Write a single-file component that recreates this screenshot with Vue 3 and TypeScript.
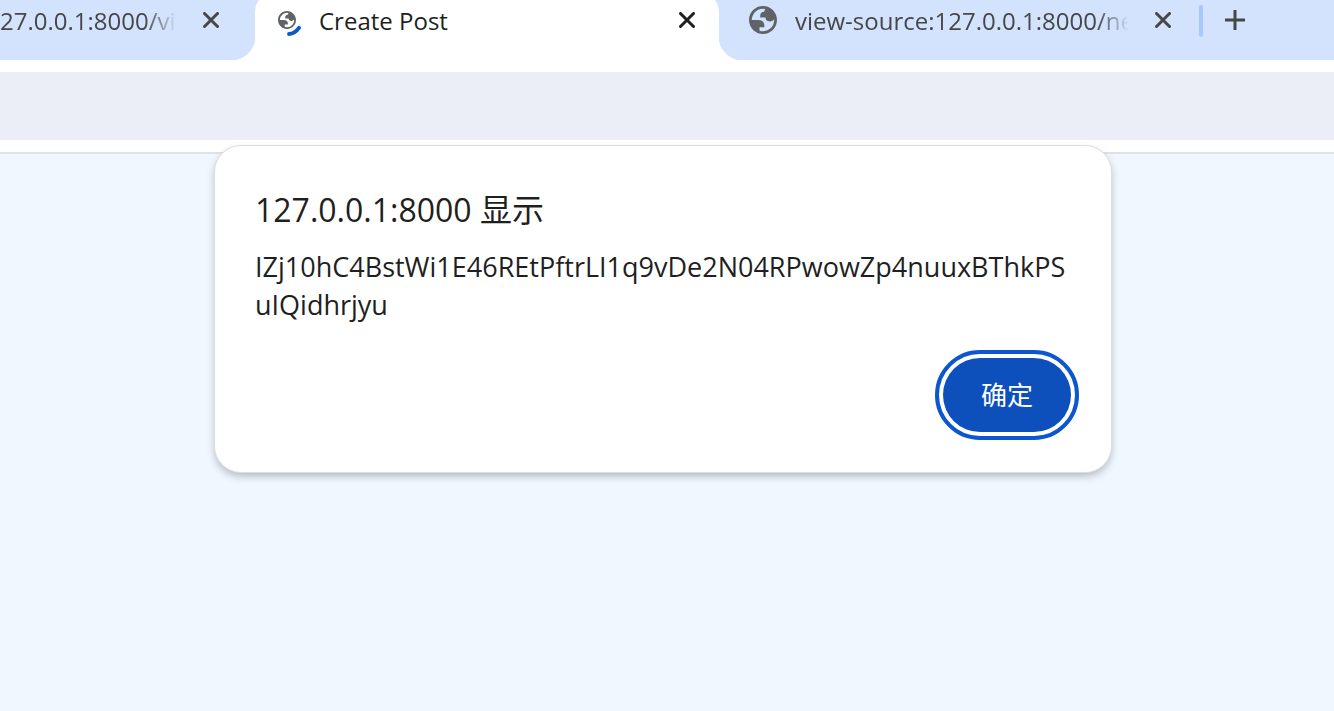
<script setup lang="ts">
import { ref } from 'vue'

interface Tab {
  title: string
  kind: 'leading' | 'active' | 'trailing'
  icon: boolean
  loading: boolean
}

const tabs: Tab[] = [
  { title: '27.0.0.1:8000/vi', kind: 'leading', icon: false, loading: false },
  { title: 'Create Post', kind: 'active', icon: true, loading: true },
  { title: 'view-source:127.0.0.1:8000/ne', kind: 'trailing', icon: true, loading: false },
]

const globe =
  'M12 2C6.48 2 2 6.48 2 12s4.48 10 10 10 10-4.48 10-10S17.52 2 12 2zM4 12h4.4c3.407.022 4.922 1.73 4.543 5.127H9.488v2.47a8.004 8.004 0 0 0 10.498-8.083C19.327 12.504 18.332 13 17 13c-2.137 0-3.206-.916-3.206-2.75h-3.748c-.274-2.728.683-4.092 2.87-4.092 0-.975.327-1.597.811-1.97A8.004 8.004 0 0 0 4 12z'

const open = ref(true)
const message = 'IZj10hC4BstWi1E46REtPftrLI1q9vDe2N04RPwowZp4nuuxBThkPSuIQidhrjyu'
</script>

<template>
  <div class="browser">
    <nav class="strip" aria-label="Tabs">
      <div v-for="tab in tabs" :key="tab.title" class="tab" :class="tab.kind">
        <span v-if="tab.icon" class="favicon">
          <svg v-if="tab.loading" width="28" height="32" viewBox="0 0 28 32" aria-hidden="true">
            <svg x="3" y="7" width="18" height="18" viewBox="2 2 20 20">
              <path :d="globe" fill="#5f6368" fill-rule="evenodd" />
            </svg>
            <path d="M14 30Q20 29.4 24 23.8" fill="none" stroke="#0b57d0" stroke-width="3.8" stroke-linecap="round" />
          </svg>
          <svg v-else width="28" height="28" viewBox="2 2 20 20" aria-hidden="true">
            <path :d="globe" fill="#5f6368" fill-rule="evenodd" />
          </svg>
        </span>
        <span class="title">{{ tab.title }}</span>
        <button class="icon-button" type="button" :aria-label="`Close ${tab.title}`">
          <svg width="16" height="16" viewBox="0 0 16 16" aria-hidden="true">
            <path d="M1.5 1.5l13 13M14.5 1.5l-13 13" stroke="currentColor" stroke-width="3" stroke-linecap="round" />
          </svg>
        </button>
      </div>
      <span class="divider"></span>
      <button class="icon-button add" type="button" aria-label="New tab">
        <svg width="20" height="20" viewBox="0 0 20 20" aria-hidden="true">
          <path d="M10 0v20M0 10h20" stroke="currentColor" stroke-width="3" />
        </svg>
      </button>
    </nav>
    <div class="toolbar"></div>
    <main class="page"></main>

    <div v-if="open" class="overlay">
      <section class="dialog" role="alertdialog" aria-labelledby="dialog-title" aria-describedby="dialog-message">
        <h1 id="dialog-title">127.0.0.1:8000 显示</h1>
        <p id="dialog-message">{{ message }}</p>
        <div class="actions">
          <button class="confirm" type="button" @click="open = false">确定</button>
        </div>
      </section>
    </div>
  </div>
</template>

<style>
body {
  background: #f0f7ff;
}
</style>

<style scoped>
.browser {
  position: relative;
  min-height: 100vh;
  display: flex;
  flex-direction: column;
  font-family: 'Open Sans', 'Noto Sans CJK SC', sans-serif;
  color: #1f1f1f;
}

.strip {
  display: flex;
  height: 60px;
  background: #d3e3fd;
  color: #474747;
}

.tab {
  position: relative;
  display: flex;
  align-items: center;
  box-sizing: border-box;
  height: 60px;
  padding-bottom: 20px;
}

.leading {
  width: 255px;
  padding-right: 36px;
}

.active {
  width: 464px;
  padding-left: 20px;
  padding-right: 24px;
  color: #1f1f1f;
}

.active::before {
  content: '';
  position: absolute;
  inset: -8px 0 0;
  border-radius: 20px 20px 0 0;
  background: #fff;
}

.active > * {
  position: relative;
}

.leading::after,
.trailing::before {
  content: '';
  position: absolute;
  bottom: 0;
  width: 24px;
  height: 24px;
}

.leading::after {
  right: 0;
  background: radial-gradient(circle at 0 0, transparent 24px, #fff 25px);
}

.trailing::before {
  left: 0;
  background: radial-gradient(circle at 100% 0, transparent 24px, #fff 25px);
}

.trailing {
  width: 480px;
  padding-left: 30px;
  padding-right: 28px;
}

.favicon {
  display: flex;
  flex: none;
  width: 28px;
  margin-right: 16px;
}

.trailing .favicon {
  margin-right: 18px;
}

.title {
  flex: 1;
  min-width: 0;
  padding-top: 2px;
  white-space: nowrap;
  font-size: 24px;
  line-height: 40px;
}

.leading .title,
.trailing .title {
  margin-right: 12px;
  mask-image: linear-gradient(to right, #000 calc(100% - 46px), transparent calc(100% - 14px));
}

.icon-button {
  display: flex;
  align-items: center;
  justify-content: center;
  flex: none;
  padding: 0;
  border: 0;
  background: none;
  color: inherit;
}

.tab .icon-button {
  width: 16px;
  height: 40px;
}

.divider {
  width: 4px;
  height: 32px;
  margin-top: 5px;
  border-radius: 2px;
  background: #a8c7fa;
}

.add {
  width: 20px;
  height: 40px;
  margin-left: 22px;
}

.toolbar {
  height: 68px;
  border-top: 12px solid #fff;
  border-bottom: 12px solid #fff;
  background: #ebeef7;
}

.page {
  flex: 1;
  border-top: 2px solid #dfe3e3;
  background: #f0f7ff;
}

.overlay {
  position: absolute;
  inset: 0;
  display: flex;
  align-items: flex-start;
  justify-content: center;
  padding: 146px 8px 0 0;
}

.dialog {
  box-sizing: border-box;
  width: 896px;
  max-width: 100%;
  padding: 40px;
  border-radius: 26px;
  background: #fff;
  box-shadow:
    0 0 0 1px #dcdfe1,
    0 4px 8px rgba(0, 0, 0, 0.26);
}

h1 {
  margin: 0;
  font-size: 32px;
  font-weight: 400;
  line-height: 48px;
}

p {
  margin: 14px 0 0;
  font-size: 27px;
  line-height: 38px;
  word-break: break-all;
}

.actions {
  display: flex;
  justify-content: flex-end;
  margin-top: 34px;
}

.confirm {
  width: 128px;
  height: 74px;
  padding: 0 0 2px;
  border: 0;
  border-radius: 37px;
  outline: 4px solid #0b57d0;
  outline-offset: 4px;
  background: #0d50bc;
  color: #fff;
  font: inherit;
  font-size: 26px;
}
</style>
